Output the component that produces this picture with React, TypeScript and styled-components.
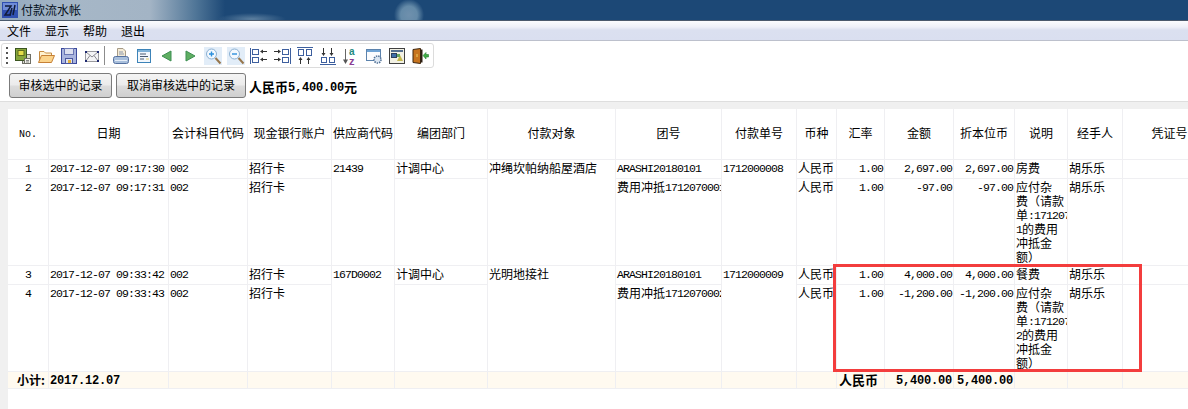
import React, { ReactElement, ReactNode } from 'react';

import styled, { createGlobalStyle } from 'styled-components';

const colors = {
  grid: '#efeff2',
  strip: '#f0f0f0',
  total: '#fffaf0',
  navy: '#1c4876',
  mark: '#f33d3d',
};

const GlobalStyle = createGlobalStyle`
  html, body {
    margin: 0;
    height: 100%;
    overflow: hidden;
    background: #fff;
  }
  #root {
    height: 100%;
  }
`;

const Page = styled.div`
  display: flex;
  flex-direction: column;
  height: 409px;
  color: #000;
  font: 12px/14px "Noto Sans CJK SC", "Liberation Sans", sans-serif;
`;

const TitleBar = styled.div`
  display: flex;
  align-items: center;
  gap: 3px;
  height: 20px;
  padding-left: 2px;
  border-bottom: 1px solid #4b5a6c;
  background:
    radial-gradient(ellipse 15px 16px at 409px 15px, #6f90ad 0, #648aa8 55%, rgba(28, 72, 118, 0) 100%),
    radial-gradient(ellipse 34px 6px at 252px 19px, #5c7f9f 0, rgba(28, 72, 118, 0) 100%),
    linear-gradient(90deg, #92a8be 0, #a6b7c7 70px, #a3b4c5 150px, #4f7597 196px, ${colors.navy} 225px);
`;

const TitleText = styled.span`
  font-size: 12px;
  color: #05101c;
`;

const MenuBar = styled.div`
  display: flex;
  align-items: center;
  height: 19px;
  padding-left: 7px;
  gap: 14px;
  border-bottom: 1px solid #bcc0cc;
  background: linear-gradient(180deg, #fbfcfe 0, #eef0f8 6px, #dbe0f0 9px, #dadff0 100%);
`;

const MenuItem = styled.span`
  font-size: 12px;
`;

const ToolbarRow = styled.div`
  box-sizing: border-box;
  padding: 2px 0 0 1px;
  height: 27px;
`;

const Toolbar = styled.div`
  display: flex;
  align-items: center;
  box-sizing: border-box;
  width: 433px;
  height: 25px;
  padding-left: 4px;
  border: 1px solid #dcdcdc;
  border-radius: 3px;
`;

const Grip = styled.span`
  width: 2px;
  height: 17px;
  margin-right: 3px;
  background: repeating-linear-gradient(180deg, #555 0, #555 2px, transparent 2px, transparent 5px);
`;

const ToolCell = styled.span`
  display: flex;
  align-items: center;
  justify-content: center;
  width: 23px;
  height: 18px;
`;

const ToolDivider = styled.span`
  width: 1px;
  height: 19px;
  margin: 0 4px 0 1px;
  background: #8c8c8c;
`;

const Glyph = styled.svg`
  display: block;
  width: 18px;
  height: 18px;
`;

const Logo = styled.svg`
  display: block;
  width: 16px;
  height: 16px;
`;

const ActionBar = styled.div`
  display: flex;
  align-items: flex-start;
  gap: 4px;
  box-sizing: border-box;
  height: 33px;
  padding: 5px 0 0 9px;
`;

const ActionButton = styled.button<{ $width: number }>`
  box-sizing: border-box;
  width: ${(p) => p.$width}px;
  height: 25px;
  padding: 0 0 2px;
  font: inherit;
  color: #000;
  border: 1px solid #7b7b7b;
  border-radius: 3px;
  background: linear-gradient(180deg, #f4f4f4 0, #ebebeb 48%, #dcdcdc 52%, #cfcfcf 100%);
`;

const Balance = styled.span`
  align-self: center;
  margin: 0 0 0 -1px;
  font-weight: 700;
  font-size: 13px;
`;

const Panel = styled.div`
  flex: 1;
  display: flex;
  min-height: 0;
  padding: 7px 0 0 8px;
  border-top: 1px solid #dedede;
  background: ${colors.strip};
`;

const GridArea = styled.div`
  position: relative;
  flex: 1;
  min-width: 0;
  overflow: hidden;
  background: #fff;
`;

const Table = styled.table`
  width: 1209px;
  table-layout: fixed;
  border-collapse: separate;
  border-spacing: 0;
`;

const Row = styled.tr<{ $height: number; $total?: boolean }>`
  height: ${(p) => p.$height}px;
  background: ${(p) => (p.$total ? colors.total : 'transparent')};
`;

const HeadCell = styled.th`
  padding: 0 0 2px;
  overflow: hidden;
  white-space: nowrap;
  font-weight: 400;
  text-align: center;
  vertical-align: middle;
  border-right: 1px solid ${colors.grid};
  border-bottom: 1px solid ${colors.grid};
`;

const Cell = styled.td<{ $align?: string }>`
  box-sizing: border-box;
  padding: 1px 1px 0 1px;
  overflow: hidden;
  white-space: nowrap;
  vertical-align: top;
  text-align: ${(p) => p.$align || 'left'};
  border-right: 1px solid ${colors.grid};
  border-bottom: 1px solid ${colors.grid};
`;

const TotalCell = styled(Cell)`
  padding-top: 0;
  vertical-align: middle;
  font-weight: 700;
`;

const Latin = styled.span`
  font-family: "Liberation Mono", monospace;
  font-size: 11.5px;
  line-height: 10px;
  letter-spacing: -0.9px;
  vertical-align: 1px;
`;

const HeadLatin = styled(Latin)`
  font-size: 10px;
  letter-spacing: 0;
`;

const TotalLatin = styled.span`
  font-family: "Liberation Mono", monospace;
  font-size: 12px;
  line-height: 10px;
  letter-spacing: -0.2px;
  vertical-align: 1px;
`;

const TotalLabel = styled.span`
  margin-right: 2px;
`;

const TotalCurrency = styled.span`
  margin-left: 1px;
  font-size: 13px;
`;

const NoteLine = styled.span`
  display: block;
`;

const Highlight = styled.div`
  position: absolute;
  left: 825px;
  top: 155px;
  box-sizing: border-box;
  width: 309px;
  height: 108px;
  border: 3px solid ${colors.mark};
  pointer-events: none;
`;

const columns = [41, 120, 79, 84, 63, 93, 128, 106, 75, 40, 48, 69, 61, 53, 55, 94];

const headers = [
  '日期',
  '会计科目代码',
  '现金银行账户',
  '供应商代码',
  '编团部门',
  '付款对象',
  '团号',
  '付款单号',
  '币种',
  '汇率',
  '金额',
  '折本位币',
  '说明',
  '经手人',
  '凭证号',
];

interface Payment {
  no: number;
  date: string;
  supplier?: string;
  dept?: string;
  payee?: string;
  team: ReactNode;
  bill?: string;
  amount: string;
  note: ReactNode;
  span?: number;
  height: number;
}

const offsetNote = (ref: string) => (
  <>
    <NoteLine>应付杂</NoteLine>
    <NoteLine>费（请款</NoteLine>
    <NoteLine>单<Latin>:171207000{ref}</Latin></NoteLine>
    <NoteLine><Latin>{ref}</Latin>的费用</NoteLine>
    <NoteLine>冲抵金</NoteLine>
    <NoteLine>额）</NoteLine>
  </>
);

const offsetTeam = (ref: string) => (
  <>费用冲抵<Latin>171207000{ref}</Latin></>
);

const payments: Payment[] = [
  {
    no: 1,
    date: '2017-12-07 09:17:30',
    supplier: '21439',
    dept: '计调中心',
    payee: '冲绳坎帕纳船屋酒店',
    team: <Latin>ARASHI20180101</Latin>,
    bill: '1712000008',
    amount: '2,697.00',
    note: '房费',
    span: 2,
    height: 19,
  },
  {
    no: 2,
    date: '2017-12-07 09:17:31',
    team: offsetTeam('1'),
    amount: '-97.00',
    note: offsetNote('1'),
    height: 87,
  },
  {
    no: 3,
    date: '2017-12-07 09:33:42',
    supplier: '167D0002',
    dept: '计调中心',
    payee: '光明地接社',
    team: <Latin>ARASHI20180101</Latin>,
    bill: '1712000009',
    amount: '4,000.00',
    note: '餐费',
    span: 2,
    height: 19,
  },
  {
    no: 4,
    date: '2017-12-07 09:33:43',
    team: offsetTeam('2'),
    amount: '-1,200.00',
    note: offsetNote('2'),
    height: 87,
  },
];

const toolIcons: ReactElement[] = [
  <>
    <rect x="8.5" y="7.5" width="8" height="9" fill="#d8d8d0" stroke="#6f6f66" />
    <rect x="1.5" y="1.5" width="11" height="12" fill="#86a63c" stroke="#3b5520" />
    <rect x="4" y="3.5" width="6" height="5" fill="#e4dd4a" stroke="#5d6b1e" />
    <rect x="10.5" y="11.5" width="6" height="5" fill="#f2f2ea" stroke="#6f6f66" />
    <path d="M12 13.5h3M12 15h3" stroke="#888" />
  </>,
  <>
    <path d="M2.5 14V4.5H7L8.5 6h6v2.5" fill="#fff2d0" stroke="#c68c42" />
    <path d="M1.5 15.5L4.5 8.5H17.5L14.5 15.5Z" fill="#fbd48c" stroke="#c68036" />
  </>,
  <>
    <rect x="1.5" y="1.5" width="15" height="15" fill="#a9b4de" stroke="#3c4a9c" />
    <rect x="4.5" y="1.5" width="9" height="6" fill="#dde0f0" stroke="#6a76b4" />
    <rect x="5.5" y="11.5" width="7" height="5" fill="#dfe2f0" stroke="#4a569e" />
    <rect x="8" y="13" width="3" height="3" fill="#e0b040" />
  </>,
  <>
    <rect x="2.5" y="4.5" width="13" height="10" fill="#f4f4f6" stroke="#9a9a9e" />
    <path d="M2.5 4.5L9 10L15.5 4.5M2.5 14.5L7 8.5M15.5 14.5L11 8.5" fill="none" stroke="#8a8a90" />
    <path d="M2 4h2v2H2zM14 4h2v2h-2zM2 13h2v2H2zM14 13h2v2h-2z" fill="#1f2a70" />
  </>,
  <>
    <path d="M5.5 1.5H11L13.5 4V10H5.5Z" fill="#f4ebd6" stroke="#a69a86" />
    <path d="M7 5h4M7 7h5" stroke="#8a97ad" />
    <rect x="1.5" y="9.5" width="15" height="7" rx="2" fill="#a8bfdc" stroke="#54709f" />
    <path d="M3 13.5h12" stroke="#e6eef8" />
  </>,
  <>
    <rect x="2.5" y="2.5" width="13" height="13" fill="#f2f7fc" stroke="#3c83b8" />
    <rect x="3" y="3" width="12" height="2" fill="#7fb2d8" />
    <path d="M5 7h6M5 9.5h8M5 12h4" stroke="#4a5a70" />
    <path d="M11 12h3" stroke="#e2c860" />
  </>,
  <path d="M13 4L4 9l9 5Z" fill="#5fae62" stroke="#3d8f52" />,
  <path d="M5 4l9 5-9 5Z" fill="#5fae62" stroke="#3d8f52" />,
  <>
    <rect width="18" height="18" fill="#e2edf8" />
    <circle cx="7.5" cy="7" r="5" fill="#f2f8fe" stroke="#8bb0d2" />
    <path d="M5 7h5M7.5 4.5v5" stroke="#2b8fdc" strokeWidth="1.4" />
    <path d="M11.5 11l5 5.5" stroke="#97764c" strokeWidth="2" />
  </>,
  <>
    <rect width="18" height="18" fill="#e2edf8" />
    <circle cx="7.5" cy="7" r="5" fill="#f2f8fe" stroke="#8bb0d2" />
    <path d="M5 7h5" stroke="#2b8fdc" strokeWidth="1.4" />
    <path d="M11.5 11l5 5.5" stroke="#97764c" strokeWidth="2" />
  </>,
  <>
    <path d="M.5 1v16" stroke="#3d5f9e" />
    <rect x="2.5" y="2.5" width="6" height="5" fill="#fff" stroke="#3d5f9e" />
    <rect x="2.5" y="10.5" width="6" height="5" fill="#fff" stroke="#3d5f9e" />
    <path d="M17 4.5h-6M17 12.5h-6" stroke="#333" />
    <path d="M10 4.5l3-2v4ZM10 12.5l3-2v4Z" fill="#333" />
  </>,
  <>
    <path d="M17.5 1v16" stroke="#3d5f9e" />
    <rect x="9.5" y="2.5" width="6" height="5" fill="#fff" stroke="#3d5f9e" />
    <rect x="9.5" y="10.5" width="6" height="5" fill="#fff" stroke="#3d5f9e" />
    <path d="M1 4.5h6M1 12.5h6" stroke="#333" />
    <path d="M8 4.5l-3-2v4ZM8 12.5l-3-2v4Z" fill="#333" />
  </>,
  <>
    <path d="M1 .5h16" stroke="#3d5f9e" />
    <rect x="2.5" y="2.5" width="5" height="6" fill="#fff" stroke="#3d5f9e" />
    <rect x="10.5" y="2.5" width="5" height="6" fill="#fff" stroke="#3d5f9e" />
    <path d="M4.5 17v-6M12.5 17v-6" stroke="#333" />
    <path d="M4.5 10l-2 3h4ZM12.5 10l-2 3h4Z" fill="#333" />
  </>,
  <>
    <path d="M1 17.5h16" stroke="#3d5f9e" />
    <rect x="2.5" y="10.5" width="5" height="5" fill="#fff" stroke="#3d5f9e" />
    <rect x="10.5" y="10.5" width="5" height="5" fill="#fff" stroke="#3d5f9e" />
    <path d="M4.5 1v6M12.5 1v6" stroke="#333" />
    <path d="M4.5 9l-2-3h4ZM12.5 9l-2-3h4Z" fill="#333" />
  </>,
  <>
    <path d="M3.5 2v13" stroke="#666" />
    <path d="M3.5 17L1 12.5h5Z" fill="#555" />
    <text x="7" y="8" fontFamily="Liberation Sans" fontWeight="700" fontSize="10" fill="#1f8a80">a</text>
    <text x="7" y="17.5" fontFamily="Liberation Sans" fontWeight="700" fontSize="11" fill="#8a3f94">z</text>
  </>,
  <>
    <rect x="1.5" y="2.5" width="14" height="11" fill="#fbfcfe" stroke="#5c83ad" />
    <rect x="2" y="3" width="13" height="2" fill="#6fa3d4" />
    <circle cx="12.5" cy="12.5" r="3.5" fill="#dbe6f2" stroke="#4e6e94" strokeWidth="1.6" strokeDasharray="1.4 1" />
  </>,
  <>
    <rect x="1.5" y="1.5" width="15" height="15" fill="#f2f1e4" stroke="#404040" />
    <rect x="3" y="3" width="12" height="2" fill="#55708f" />
    <rect x="3.5" y="6.5" width="5" height="4" fill="#3f6ea8" stroke="#2c3f5c" />
    <path d="M9 14l3-6 3 6Z" fill="#c4b84c" />
    <rect x="9" y="7" width="3" height="3" fill="#6aa55c" />
  </>,
  <>
    <path d="M2 2.5L9.5 1.5V16.5L2 15.5Z" fill="#c7741e" stroke="#3d2610" />
    <path d="M9.5 2.5H11.5V15.5H9.5Z" fill="#2c1e12" />
    <path d="M6 7v3" stroke="#f0d060" />
    <path d="M12 8.5L15 5.5V7.5H17.5V10H15V12Z" fill="#3fae46" stroke="#2a7d34" strokeWidth=".6" />
  </>,
];

const ToolbarIcons = (): ReactElement => (
  <Toolbar>
    <Grip />
    {toolIcons.map((icon, i) => (
      <React.Fragment key={`tool-${i}`}>
        {i === 4 && <ToolDivider />}
        <ToolCell>
          <Glyph viewBox="0 0 18 18">{icon}</Glyph>
        </ToolCell>
      </React.Fragment>
    ))}
  </Toolbar>
);

const PaymentRow = ({ item }: { item: Payment }): ReactElement => (
  <Row $height={item.height}>
    <Cell $align="center"><Latin>{item.no}</Latin></Cell>
    <Cell><Latin>{item.date}</Latin></Cell>
    <Cell><Latin>002</Latin></Cell>
    <Cell>招行卡</Cell>
    {item.span && <Cell rowSpan={item.span}><Latin>{item.supplier}</Latin></Cell>}
    <Cell>{item.dept}</Cell>
    {item.span && <Cell rowSpan={item.span}>{item.payee}</Cell>}
    <Cell>{item.team}</Cell>
    {item.span && <Cell rowSpan={item.span}><Latin>{item.bill}</Latin></Cell>}
    <Cell>人民币</Cell>
    <Cell $align="right"><Latin>1.00</Latin></Cell>
    <Cell $align="right"><Latin>{item.amount}</Latin></Cell>
    <Cell $align="right"><Latin>{item.amount}</Latin></Cell>
    <Cell>{item.note}</Cell>
    <Cell>胡乐乐</Cell>
    <Cell />
  </Row>
);

export default function App(): ReactElement {
  return (
    <Page>
      <GlobalStyle />
      <TitleBar>
        <Logo viewBox="0 0 16 16">
          <rect width="16" height="16" fill="#2f4fb0" />
          <rect x="1" y="1" width="14" height="7" fill="#6f8cd8" />
          <path d="M3 4h6L3 13h6M10 6l-2 7M13 3l-2 10" fill="none" stroke="#101c3a" strokeWidth="1.5" />
        </Logo>
        <TitleText>付款流水帐</TitleText>
      </TitleBar>
      <MenuBar>
        <MenuItem>文件</MenuItem>
        <MenuItem>显示</MenuItem>
        <MenuItem>帮助</MenuItem>
        <MenuItem>退出</MenuItem>
      </MenuBar>
      <ToolbarRow>
        <ToolbarIcons />
      </ToolbarRow>
      <ActionBar>
        <ActionButton $width={103}>审核选中的记录</ActionButton>
        <ActionButton $width={130}>取消审核选中的记录</ActionButton>
        <Balance>人民币<TotalLatin>5,400.00</TotalLatin>元</Balance>
      </ActionBar>
      <Panel>
        <GridArea>
          <Table>
            <colgroup>
              {columns.map((width, i) => (
                <col key={`col-${i}`} width={width} />
              ))}
            </colgroup>
            <tbody>
              <Row $height={51}>
                <HeadCell><HeadLatin>No.</HeadLatin></HeadCell>
                {headers.map((title) => (
                  <HeadCell key={title}>{title}</HeadCell>
                ))}
              </Row>
              {payments.map((item) => (
                <PaymentRow key={item.no} item={item} />
              ))}
              <Row $height={17} $total>
                <TotalCell $align="right"><TotalLabel>小计:</TotalLabel></TotalCell>
                <TotalCell><TotalLatin>2017.12.07</TotalLatin></TotalCell>
                <TotalCell />
                <TotalCell />
                <TotalCell />
                <TotalCell />
                <TotalCell />
                <TotalCell />
                <TotalCell />
                <TotalCell />
                <TotalCell><TotalCurrency>人民币</TotalCurrency></TotalCell>
                <TotalCell $align="right"><TotalLatin>5,400.00</TotalLatin></TotalCell>
                <TotalCell $align="right"><TotalLatin>5,400.00</TotalLatin></TotalCell>
                <TotalCell />
                <TotalCell />
                <TotalCell />
              </Row>
            </tbody>
          </Table>
          <Highlight />
        </GridArea>
      </Panel>
    </Page>
  );
}
